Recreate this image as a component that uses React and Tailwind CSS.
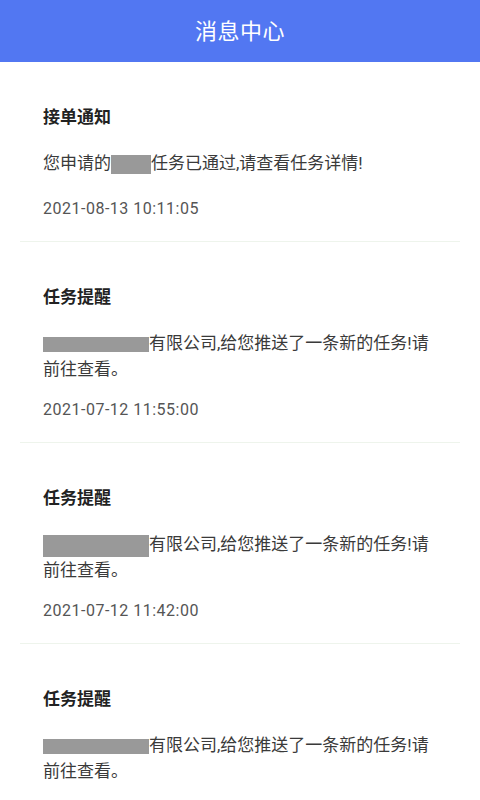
import React from 'react';

const font = { fontFamily: 'Roboto, "Noto Sans CJK SC", "Noto Sans", sans-serif' };

// 消息列表
const messages = [
  {
    title: '接单通知',
    mask: 'w-[40px] h-[19px]',
    text: '任务已通过,请查看任务详情!',
    prefix: '您申请的',
    time: '2021-08-13 10:11:05',
    single: true,
  },
  {
    title: '任务提醒',
    mask: 'w-[106px] h-[15px]',
    text: '有限公司,给您推送了一条新的任务!请前往查看。',
    time: '2021-07-12 11:55:00',
  },
  {
    title: '任务提醒',
    mask: 'w-[106px] h-[22px]',
    text: '有限公司,给您推送了一条新的任务!请前往查看。',
    time: '2021-07-12 11:42:00',
  },
  {
    title: '任务提醒',
    mask: 'w-[106px] h-[15px]',
    text: '有限公司,给您推送了一条新的任务!请前往查看。',
    time: '2021-07-12 11:30:00',
  },
];

const MessageItem = ({ msg }) => (
  <div className="mx-[20px] pl-[23px] pr-[22px] pt-[43px] pb-[22px] border-b border-[#eef4ec]">
    <h3 className="text-[17px] leading-[24px] font-bold text-[#222]">{msg.title}</h3>
    <p className="mt-[21px] text-[17px] leading-[26px] text-[#3a3a3a]">
      {msg.prefix}
      <span className={`inline-block align-middle bg-[#999] ${msg.mask}`} />
      {msg.text}
    </p>
    <p className={`${msg.single ? 'mt-[23px]' : 'mt-[18px]'} text-[16px] leading-[20px] tracking-[0.5px] text-[#555]`}>
      {msg.time}
    </p>
  </div>
);

export default function App() {
  return (
    <div className="w-[480px] h-[800px] overflow-hidden bg-white" style={font}>
      <header className="h-[62px] bg-[#5277f2] flex items-center justify-center">
        <h1 className="text-[22px] text-white tracking-[0.5px]">消息中心</h1>
      </header>
      <div>
        {messages.map((m, i) => (
          <MessageItem key={i} msg={m} />
        ))}
      </div>
    </div>
  );
}
